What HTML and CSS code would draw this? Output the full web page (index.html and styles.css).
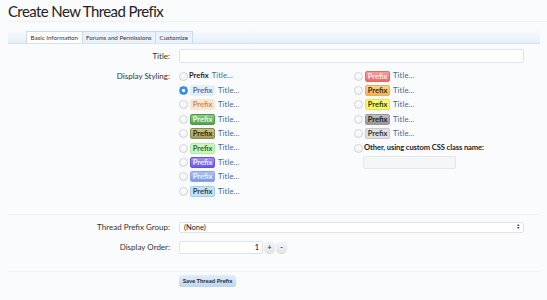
FILE: index.html
```html
<!DOCTYPE html>
<html lang="en">
<head>
    <meta charset="UTF-8">
    <title>Create New Thread Prefix</title>
    <link rel="stylesheet" href="styles.css">
</head>
<body>
    <h1 class="title-bar">Create New Thread Prefix</h1>

    <div class="tabs">
        <span class="tab active">Basic Information</span>
        <span class="tab">Forums and Permissions</span>
        <span class="tab">Customize</span>
    </div>

    <form class="prefix-form">
        <div class="row row-title">
            <label class="row-label">Title:</label>
            <div class="row-field"><input type="text" class="text-box wide"></div>
        </div>

        <div class="row row-styling">
            <label class="row-label">Display Styling:</label>
            <div class="row-field styling-grid">
                <ul class="style-list">
                    <li><input type="radio" name="css"><span class="plain">Prefix</span><span class="ttl">Title...</span></li>
                    <li><input type="radio" name="css" checked><span class="prefix p-primary">Prefix</span><span class="ttl">Title...</span></li>
                    <li><input type="radio" name="css"><span class="prefix p-secondary">Prefix</span><span class="ttl">Title...</span></li>
                    <li><input type="radio" name="css"><span class="prefix p-green">Prefix</span><span class="ttl">Title...</span></li>
                    <li><input type="radio" name="css"><span class="prefix p-olive">Prefix</span><span class="ttl">Title...</span></li>
                    <li><input type="radio" name="css"><span class="prefix p-lightgreen">Prefix</span><span class="ttl">Title...</span></li>
                    <li><input type="radio" name="css"><span class="prefix p-royal">Prefix</span><span class="ttl">Title...</span></li>
                    <li><input type="radio" name="css"><span class="prefix p-sky">Prefix</span><span class="ttl">Title...</span></li>
                    <li><input type="radio" name="css"><span class="prefix p-ice">Prefix</span><span class="ttl">Title...</span></li>
                </ul>
                <ul class="style-list">
                    <li><input type="radio" name="css"><span class="prefix p-red">Prefix</span><span class="ttl">Title...</span></li>
                    <li><input type="radio" name="css"><span class="prefix p-orange">Prefix</span><span class="ttl">Title...</span></li>
                    <li><input type="radio" name="css"><span class="prefix p-yellow">Prefix</span><span class="ttl">Title...</span></li>
                    <li><input type="radio" name="css"><span class="prefix p-gray">Prefix</span><span class="ttl">Title...</span></li>
                    <li><input type="radio" name="css"><span class="prefix p-silver">Prefix</span><span class="ttl">Title...</span></li>
                    <li><input type="radio" name="css"><span class="other">Other, using custom CSS class name:</span></li>
                    <li class="custom-class"><input type="text" class="text-box short" disabled></li>
                </ul>
            </div>
        </div>

        <hr class="divider">

        <div class="row row-group">
            <label class="row-label">Thread Prefix Group:</label>
            <div class="row-field">
                <div class="select-box">(None)<span class="arrows">&#9650;<br>&#9660;</span></div>
            </div>
        </div>

        <div class="row row-order">
            <label class="row-label">Display Order:</label>
            <div class="row-field spinner">
                <input type="text" class="text-box num" value="1">
                <button type="button" class="spin">+</button>
                <button type="button" class="spin">-</button>
            </div>
        </div>

        <hr class="divider last">

        <div class="row row-submit">
            <span class="row-label"></span>
            <div class="row-field"><button type="button" class="save-button">Save Thread Prefix</button></div>
        </div>
    </form>
</body>
</html>
```

FILE: styles.css
```css
body {
    margin: 0;
    padding: 0;
    font-family: Lato, "Liberation Sans", sans-serif;
    background: #fafbfd;
    color: #141414;
}
.title-bar {
    margin: 0 0 0 8px;
    padding: 1px 0 0 0;
    height: 20px;
    font-size: 15px;
    font-weight: normal;
    line-height: 20px;
    color: #222;
    border-bottom: 1px solid #eef1f6;
    letter-spacing: -0.6px;
}
.tabs {
    margin: 6px 7px 0 8px;
    padding: 3px 0 0 18px;
    height: 12px;
    display: flex;
    background: linear-gradient(to bottom, #fbfcfe, #e6eff9);
    border-bottom: 1px solid #d4e3f1;
}
.tab {
    font-size: 6.2px;
    line-height: 11px;
    padding: 0 3.5px;
    color: #333;
    background: #e9f1fa;
    border: 1px solid #c9dbee;
    border-bottom: none;
    border-left: none;
}
.tab:first-child {
    border-left: 1px solid #c9dbee;
}
.tab.active {
    background: #fff;
}
.prefix-form {
    margin: 0 7px 0 8px;
}
.row {
    display: flex;
    gap: 9px;
}
.row-label {
    width: 162px;
    flex: none;
    text-align: right;
    font-size: 8px;
    color: #333;
}
.row-field {
    flex: 1;
    display: flex;
    align-items: center;
    font-size: 8px;
    line-height: 1;
}
.row-title {
    margin-top: 5px;
    align-items: center;
}
.text-box {
    box-sizing: border-box;
    border: 1px solid #dfe3e8;
    border-radius: 2px;
    background: #fff;
    font-family: inherit;
    font-size: 7.5px;
    padding: 0 3px;
    margin: 0;
    outline: none;
}
.wide {
    width: 345px;
    height: 14px;
}
.row-styling {
    margin-top: 6px;
}
.row-styling .row-label {
    line-height: 14px;
}
.styling-grid {
    align-items: flex-start;
}
.style-list {
    list-style: none;
    margin: 0;
    padding: 0;
    width: 175px;
}
.style-list li {
    height: 14.4px;
    display: flex;
    align-items: center;
    font-size: 8px;
    white-space: nowrap;
}
.style-list input[type="radio"] {
    appearance: none;
    box-sizing: border-box;
    width: 9px;
    height: 9px;
    margin: 0 1px 0 0;
    border: 1px solid #cfd2d6;
    border-radius: 50%;
    background: linear-gradient(#fff, #f1f2f4);
}
.style-list input[type="radio"]:checked {
    border-color: #2f87e8;
    background: radial-gradient(circle, #fff 0 1.3px, #3a8ff0 1.8px);
}
.plain {
    font-weight: bold;
    color: #222;
    font-size: 7.5px;
}
.other {
    color: #222;
    font-size: 7.6px;
    font-weight: bold;
    letter-spacing: -0.1px;
}
.ttl {
    color: #3a6a9a;
    font-size: 7.6px;
    margin-left: 3px;
    letter-spacing: 0.15px;
}
.prefix {
    display: inline-block;
    box-sizing: border-box;
    width: 25px;
    height: 11px;
    line-height: 9px;
    margin-left: 1px;
    text-align: center;
    font-size: 7.5px;
    font-weight: bold;
    border: 1px solid transparent;
    border-radius: 2px;
}
.p-primary { background: #e6eff9; color: #4d74a8; border-color: #e6eff9; }
.p-secondary { background: #fbe6d2; color: #c58c5c; border-color: #fbe6d2; }
.p-green { background: linear-gradient(#8ccc86, #53a24f); color: #eafbe6; border-color: #4e9a4b; }
.p-olive { background: linear-gradient(#c9c288, #a39c5a); color: #2e2b10; border-color: #8f8948; }
.p-lightgreen { background: #c9f4c3; color: #2f6b2b; border-color: #b3e8ab; }
.p-royal { background: linear-gradient(#9f90f8, #6b5ae8); color: #f3f0ff; border-color: #6454d8; }
.p-sky { background: linear-gradient(#a9c3f1, #7a9ae2); color: #eef3ff; border-color: #8aa5e0; }
.p-ice { background: #c6e3f6; color: #24435c; border-color: #a8cde6; }
.p-red { background: linear-gradient(#f79c9c, #ec6b6b); color: #fff0f0; border-color: #e46a6a; }
.p-orange { background: linear-gradient(#fbd488, #f3b354); color: #3a2a10; border-color: #eaae55; }
.p-yellow { background: #fbfb6a; color: #333310; border-color: #e6e645; }
.p-gray { background: linear-gradient(#bdbdbd, #999); color: #222; border-color: #999; }
.p-silver { background: #e0e0e0; color: #333; border-color: #c9c9c9; }
.style-list li.custom-class {
    height: 14px;
    padding-left: 9px;
    align-items: flex-start;
    padding-top: 1px;
}
.short {
    width: 93px;
    height: 13px;
    background: #f5f6f8;
    border-color: #e4e6ea;
}
.divider {
    border: none;
    border-top: 1px solid #eef1f5;
    margin: 15px 0 0 0;
}
.row-group {
    margin-top: 7px;
    align-items: center;
}
.row-group .row-label,
.row-order .row-label {
    line-height: 10px;
}
.select-box {
    position: relative;
    box-sizing: border-box;
    width: 345px;
    height: 11px;
    line-height: 9px;
    font-size: 7.5px;
    padding-left: 4px;
    background: #fff;
    border: 1px solid #e2e4e8;
    border-radius: 2px;
    color: #222;
}
.arrows {
    position: absolute;
    right: 3px;
    top: 1px;
    font-size: 3.5px;
    line-height: 3.5px;
    color: #222;
}
.row-order {
    margin-top: 8px;
    align-items: center;
}
.spinner {
    gap: 1px;
}
.num {
    width: 84px;
    height: 13px;
    text-align: right;
}
.spin {
    width: 11px;
    height: 12px;
    padding: 0;
    border: none;
    border-radius: 5px;
    background: linear-gradient(#f5f6f8, #e1e4e8);
    box-shadow: 0 1px 1px rgba(0, 0, 0, 0.15);
    font-family: inherit;
    font-size: 7px;
    font-weight: bold;
    color: #333;
    line-height: 12px;
}
.divider.last {
    margin-top: 17px;
}
.row-submit {
    margin-top: 3px;
}
.save-button {
    width: 57px;
    height: 12px;
    padding: 0;
    border: none;
    border-radius: 3px;
    background: linear-gradient(#e3eef9, #bcd6ee);
    box-shadow: 0 1px 1px rgba(0, 0, 0, 0.12);
    font-family: inherit;
    font-size: 6px;
    font-weight: bold;
    white-space: nowrap;
    color: #1f2d3a;
}
```
